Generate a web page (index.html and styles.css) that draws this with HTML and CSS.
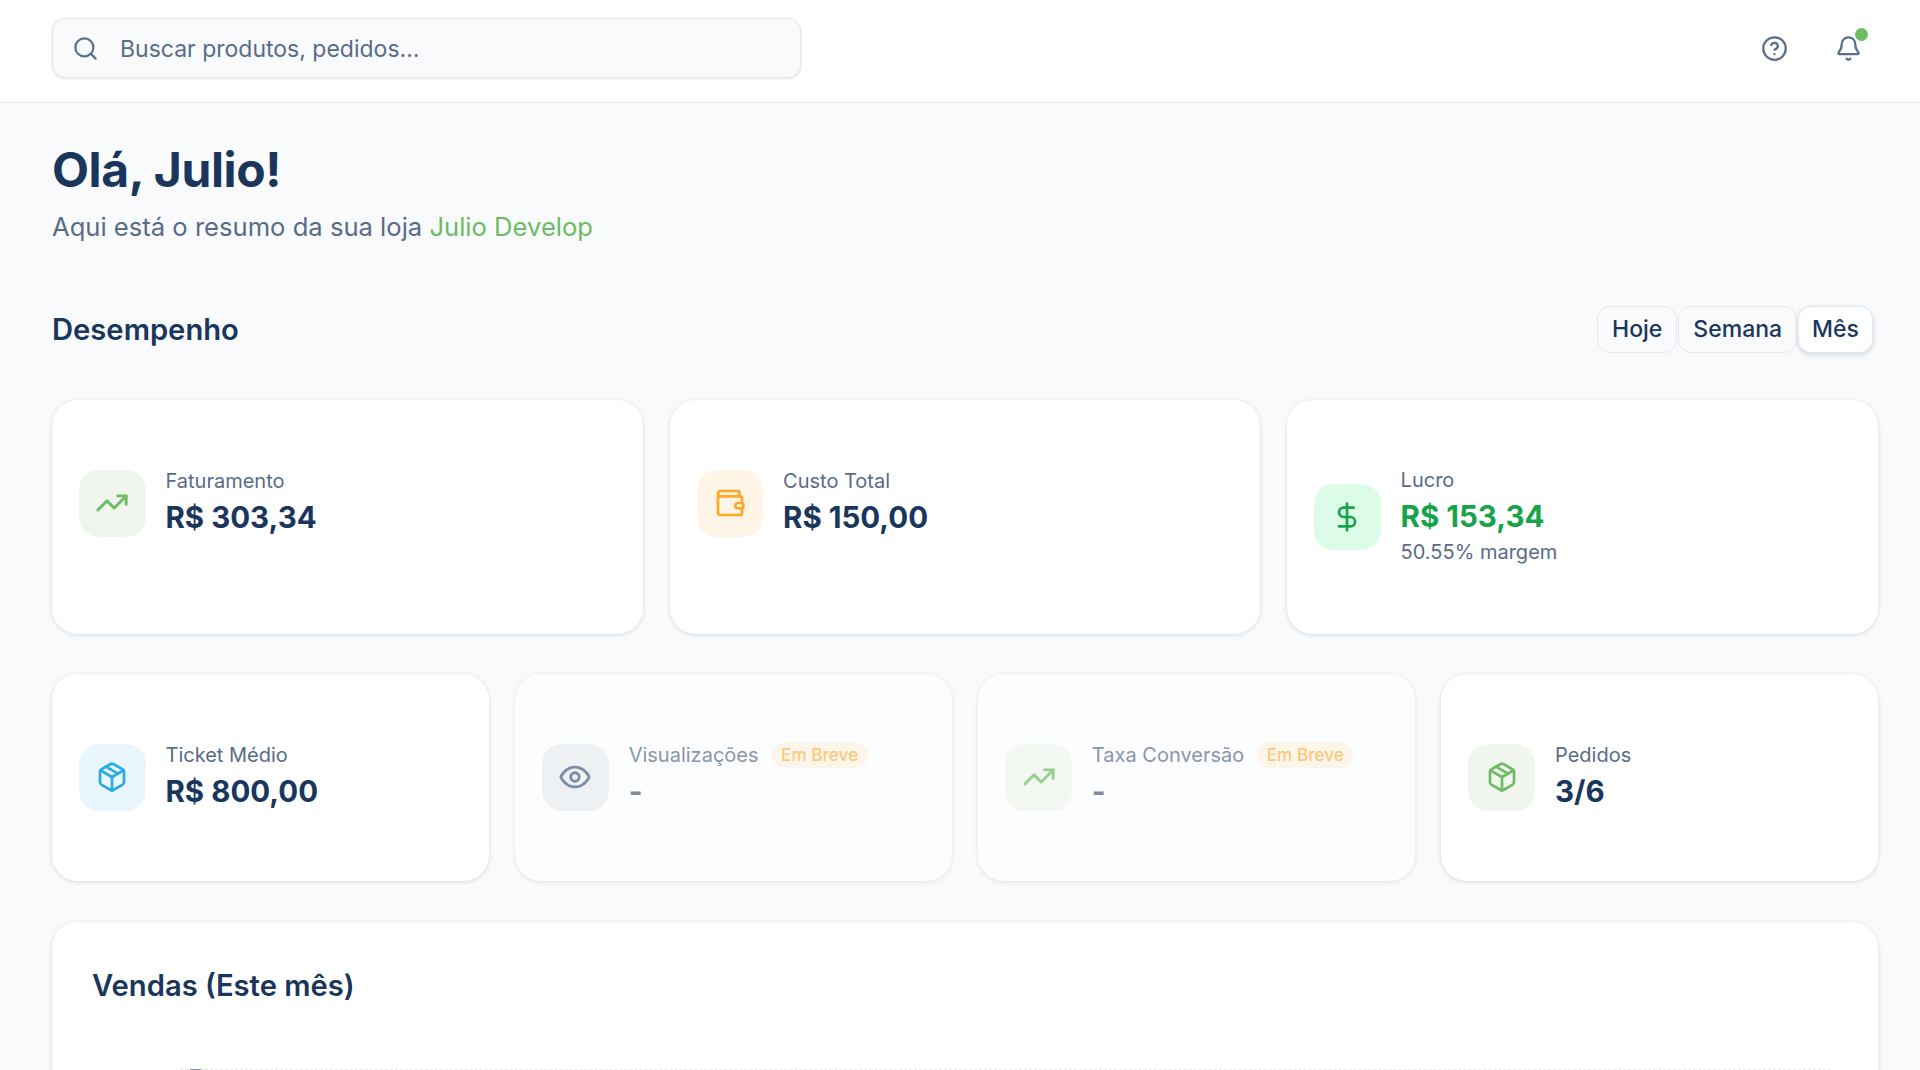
FILE: index.html
```html
<!DOCTYPE html>
<html lang="en">
<head>
    <meta charset="UTF-8">
    <meta name="viewport" content="width=device-width, initial-scale=1.0">
    <title>Dashboard</title>
    <link rel="stylesheet" href="styles.css">
</head>
<body>
    <header class="topbar">
        <div class="search">
            <svg class="icon search-icon" viewBox="0 0 24 24"><circle cx="11" cy="11" r="8"/><path d="m21 21-4.3-4.3"/></svg>
            <span class="search-text">Buscar produtos, pedidos...</span>
        </div>
        <div class="topbar-actions">
            <svg class="icon action-icon" viewBox="0 0 24 24"><circle cx="12" cy="12" r="10"/><path d="M9.09 9a3 3 0 0 1 5.83 1c0 2-3 3-3 3"/><path d="M12 17h.01"/></svg>
            <div class="bell">
                <svg class="icon action-icon" viewBox="0 0 24 24"><path d="M10.268 21a2 2 0 0 0 3.464 0"/><path d="M3.262 15.326A1 1 0 0 0 4 17h16a1 1 0 0 0 .74-1.673C19.41 13.956 18 12.499 18 8A6 6 0 0 0 6 8c0 4.499-1.411 5.956-2.738 7.326"/></svg>
                <span class="bell-dot"></span>
            </div>
        </div>
    </header>

    <main class="content">
        <h1 class="greeting">Olá, Julio!</h1>
        <p class="subtitle">Aqui está o resumo da sua loja <span class="store">Julio Develop</span></p>

        <div class="section-head">
            <h2 class="section-title">Desempenho</h2>
            <div class="periods">
                <button class="period">Hoje</button>
                <button class="period">Semana</button>
                <button class="period active">Mês</button>
            </div>
        </div>

        <div class="grid grid-3">
            <div class="card">
                <div class="stat">
                    <div class="stat-icon bg-green">
                        <svg class="icon icon-wide green" viewBox="0 0 24 24"><polyline points="22 7 13.5 15.5 8.5 10.5 2 17"/><polyline points="16 7 22 7 22 13"/></svg>
                    </div>
                    <div>
                        <div class="stat-label">Faturamento</div>
                        <div class="stat-value">R$ 303,34</div>
                    </div>
                </div>
            </div>
            <div class="card">
                <div class="stat">
                    <div class="stat-icon bg-orange">
                        <svg class="icon orange" viewBox="0 0 24 24"><path d="M19 7V4a1 1 0 0 0-1-1H5a2 2 0 0 0 0 4h15a1 1 0 0 1 1 1v4h-3a2 2 0 0 0 0 4h3a1 1 0 0 0 1-1v-2a1 1 0 0 0-1-1"/><path d="M3 5v14a2 2 0 0 0 2 2h15a1 1 0 0 0 1-1v-4"/></svg>
                    </div>
                    <div>
                        <div class="stat-label">Custo Total</div>
                        <div class="stat-value">R$ 150,00</div>
                    </div>
                </div>
            </div>
            <div class="card">
                <div class="stat">
                    <div class="stat-icon bg-profit">
                        <svg class="icon profit" viewBox="0 0 24 24"><line x1="12" y1="2" x2="12" y2="22"/><path d="M17 5H9.5a3.5 3.5 0 0 0 0 7h5a3.5 3.5 0 0 1 0 7H6"/></svg>
                    </div>
                    <div>
                        <div class="stat-label">Lucro</div>
                        <div class="stat-value profit-text">R$ 153,34</div>
                        <div class="stat-note">50.55% margem</div>
                    </div>
                </div>
            </div>
        </div>

        <div class="grid grid-4">
            <div class="card">
                <div class="stat">
                    <div class="stat-icon bg-blue">
                        <svg class="icon blue" viewBox="0 0 24 24"><path d="M21 8a2 2 0 0 0-1-1.73l-7-4a2 2 0 0 0-2 0l-7 4A2 2 0 0 0 3 8v8a2 2 0 0 0 1 1.73l7 4a2 2 0 0 0 2 0l7-4A2 2 0 0 0 21 16Z"/><path d="m7.5 4.27 9 5.15"/><path d="m3.3 7 8.7 5 8.7-5"/><path d="M12 22V12"/></svg>
                    </div>
                    <div>
                        <div class="stat-label">Ticket Médio</div>
                        <div class="stat-value">R$ 800,00</div>
                    </div>
                </div>
            </div>
            <div class="card disabled">
                <div class="stat">
                    <div class="stat-icon bg-gray">
                        <svg class="icon icon-wide gray" viewBox="0 0 24 24"><path d="M2 12s3-7 10-7 10 7 10 7-3 7-10 7-10-7-10-7Z"/><circle cx="12" cy="12" r="3"/></svg>
                    </div>
                    <div>
                        <div class="stat-label">Visualizações <span class="badge">Em Breve</span></div>
                        <div class="stat-value dash">-</div>
                    </div>
                </div>
            </div>
            <div class="card disabled">
                <div class="stat">
                    <div class="stat-icon bg-green">
                        <svg class="icon icon-wide green" viewBox="0 0 24 24"><polyline points="22 7 13.5 15.5 8.5 10.5 2 17"/><polyline points="16 7 22 7 22 13"/></svg>
                    </div>
                    <div>
                        <div class="stat-label">Taxa Conversão <span class="badge">Em Breve</span></div>
                        <div class="stat-value dash">-</div>
                    </div>
                </div>
            </div>
            <div class="card">
                <div class="stat">
                    <div class="stat-icon bg-green">
                        <svg class="icon green" viewBox="0 0 24 24"><path d="M21 8a2 2 0 0 0-1-1.73l-7-4a2 2 0 0 0-2 0l-7 4A2 2 0 0 0 3 8v8a2 2 0 0 0 1 1.73l7 4a2 2 0 0 0 2 0l7-4A2 2 0 0 0 21 16Z"/><path d="m7.5 4.27 9 5.15"/><path d="m3.3 7 8.7 5 8.7-5"/><path d="M12 22V12"/></svg>
                    </div>
                    <div>
                        <div class="stat-label">Pedidos</div>
                        <div class="stat-value">3/6</div>
                    </div>
                </div>
            </div>
        </div>

        <div class="card chart-card">
            <h3 class="chart-title">Vendas (Este mês)</h3>
            <div class="chart">
                <span class="chart-tick"></span>
            </div>
        </div>
    </main>
</body>
</html>
```

FILE: styles.css
```css
* {
    box-sizing: border-box;
}

html,
body {
    height: 100%;
}

body {
    font-family: Inter, "Noto Sans", sans-serif;
    background-color: #f8fafc;
    color: #1a365d;
    margin: 0;
    padding: 0;
    overflow: hidden;
}

.icon {
    width: 32px;
    height: 32px;
    fill: none;
    stroke: currentColor;
    stroke-width: 2;
    stroke-linecap: round;
    stroke-linejoin: round;
    flex-shrink: 0;
}

.icon-wide {
    width: 34px;
    height: 34px;
}

/* top bar */
.topbar {
    height: 103px;
    background: white;
    border-bottom: 1.5px solid #e2e8f0;
    display: flex;
    align-items: center;
    justify-content: space-between;
    padding: 0 38px 0 52px;
}

.search {
    width: 749px;
    height: 60px;
    margin-top: -6px;
    display: flex;
    align-items: center;
    gap: 21px;
    padding: 0 19px;
    background: #f8fafc;
    border: 1.5px solid #e2e8f0;
    border-radius: 13px;
    box-shadow: 0 1px 3px rgba(0, 0, 0, 0.1);
}

.search-icon {
    width: 27px;
    height: 27px;
    color: #5a6f8c;
}

.search-text {
    font-size: 23px;
    color: #5a6b88;
    padding-top: 2px;
}

.topbar-actions {
    display: flex;
    align-items: center;
    gap: 47px;
    margin-top: -6px;
}

.action-icon {
    width: 27px;
    height: 27px;
    color: #5a6f8c;
    display: block;
}

.bell {
    position: relative;
    margin-right: 20px;
}

.bell-dot {
    position: absolute;
    top: -7px;
    right: -6px;
    width: 13px;
    height: 13px;
    border-radius: 50%;
    background: #6dbb63;
}

/* page */
.content {
    padding: 34.5px 42px 0 52px;
}

.greeting {
    font-size: 48px;
    font-weight: 700;
    line-height: 64px;
    letter-spacing: -0.4px;
    margin: 0;
}

.subtitle {
    font-size: 25.6px;
    line-height: 32px;
    color: #5a6b88;
    margin: 9px 0 0;
}

.store {
    color: #6dbb63;
}

.section-head {
    display: flex;
    align-items: center;
    justify-content: space-between;
    height: 47px;
    margin-top: 63px;
    margin-bottom: 47.5px;
}

.section-title {
    font-size: 29.2px;
    font-weight: 600;
    margin: 0;
}

.periods {
    display: flex;
    gap: 1px;
    margin-right: 5px;
}

.period {
    height: 47px;
    padding: 0 14px;
    font-family: inherit;
    font-size: 23px;
    font-weight: 500;
    color: #1a365d;
    background: #f8fafc;
    border: 1.5px solid #e2e8f0;
    border-radius: 13px;
}

.period.active {
    padding: 0 13px;
    background: white;
    box-shadow: 0 2px 5px rgba(26, 54, 93, 0.16);
}

.grid {
    display: grid;
    gap: 26.67px;
    margin-bottom: 40px;
}

.grid-3 {
    grid-template-columns: repeat(3, 1fr);
}

.grid-4 {
    grid-template-columns: repeat(4, 1fr);
    margin-bottom: 41px;
}

.card {
    background: white;
    border-radius: 26px;
    padding: 70px 27px;
    box-shadow: 0 1px 4px rgba(26, 54, 93, 0.16);
}

.card.disabled {
    opacity: 0.7;
}

.stat {
    display: flex;
    align-items: center;
    gap: 20px;
}

.stat-icon {
    width: 66.5px;
    height: 66.5px;
    border-radius: 20px;
    display: flex;
    align-items: center;
    justify-content: center;
    flex-shrink: 0;
}

.bg-green { background: #f0f6ee; }
.bg-orange { background: #fff5e6; }
.bg-profit { background: #dcfce7; }
.bg-blue { background: #e9f6fd; }
.bg-gray { background: #eaeef2; }

.green { color: #6dbb63; }
.orange { color: #ffa726; }
.profit { color: #16a34a; }
.blue { color: #29abe2; }
.gray { color: #4a5f7c; }

.stat-label {
    font-size: 20px;
    line-height: 22px;
    margin-top: -1.5px;
    color: #5a6b88;
    display: flex;
    align-items: center;
    gap: 13px;
}

.stat-value {
    font-size: 29.5px;
    font-weight: 700;
    line-height: 36px;
    margin-top: 7.5px;
}

.profit-text {
    color: #16a34a;
}

.dash {
    color: #4a5f7c;
}

.stat-note {
    font-size: 20px;
    line-height: 23px;
    color: #5a6b88;
    margin-top: 7px;
}

.badge {
    font-size: 17.2px;
    font-weight: 500;
    line-height: 26px;
    margin: -2px 0;
    padding: 0 9.5px;
    border-radius: 13px;
    color: rgba(255, 167, 38, 0.85);
    background: #fff3e2;
}

.chart-card {
    padding: 40px 40px;
    height: 300px;
}

.chart-title {
    font-size: 29.2px;
    font-weight: 600;
    line-height: 48px;
    margin: 0;
}

.chart {
    position: relative;
    margin: 59.5px 7px 0 88px;
    border-top: 1px dashed #e2e8f0;
}

.chart-tick {
    position: absolute;
    top: -1px;
    left: 10px;
    width: 11px;
    height: 1px;
    background: #8a94ab;
}
```
